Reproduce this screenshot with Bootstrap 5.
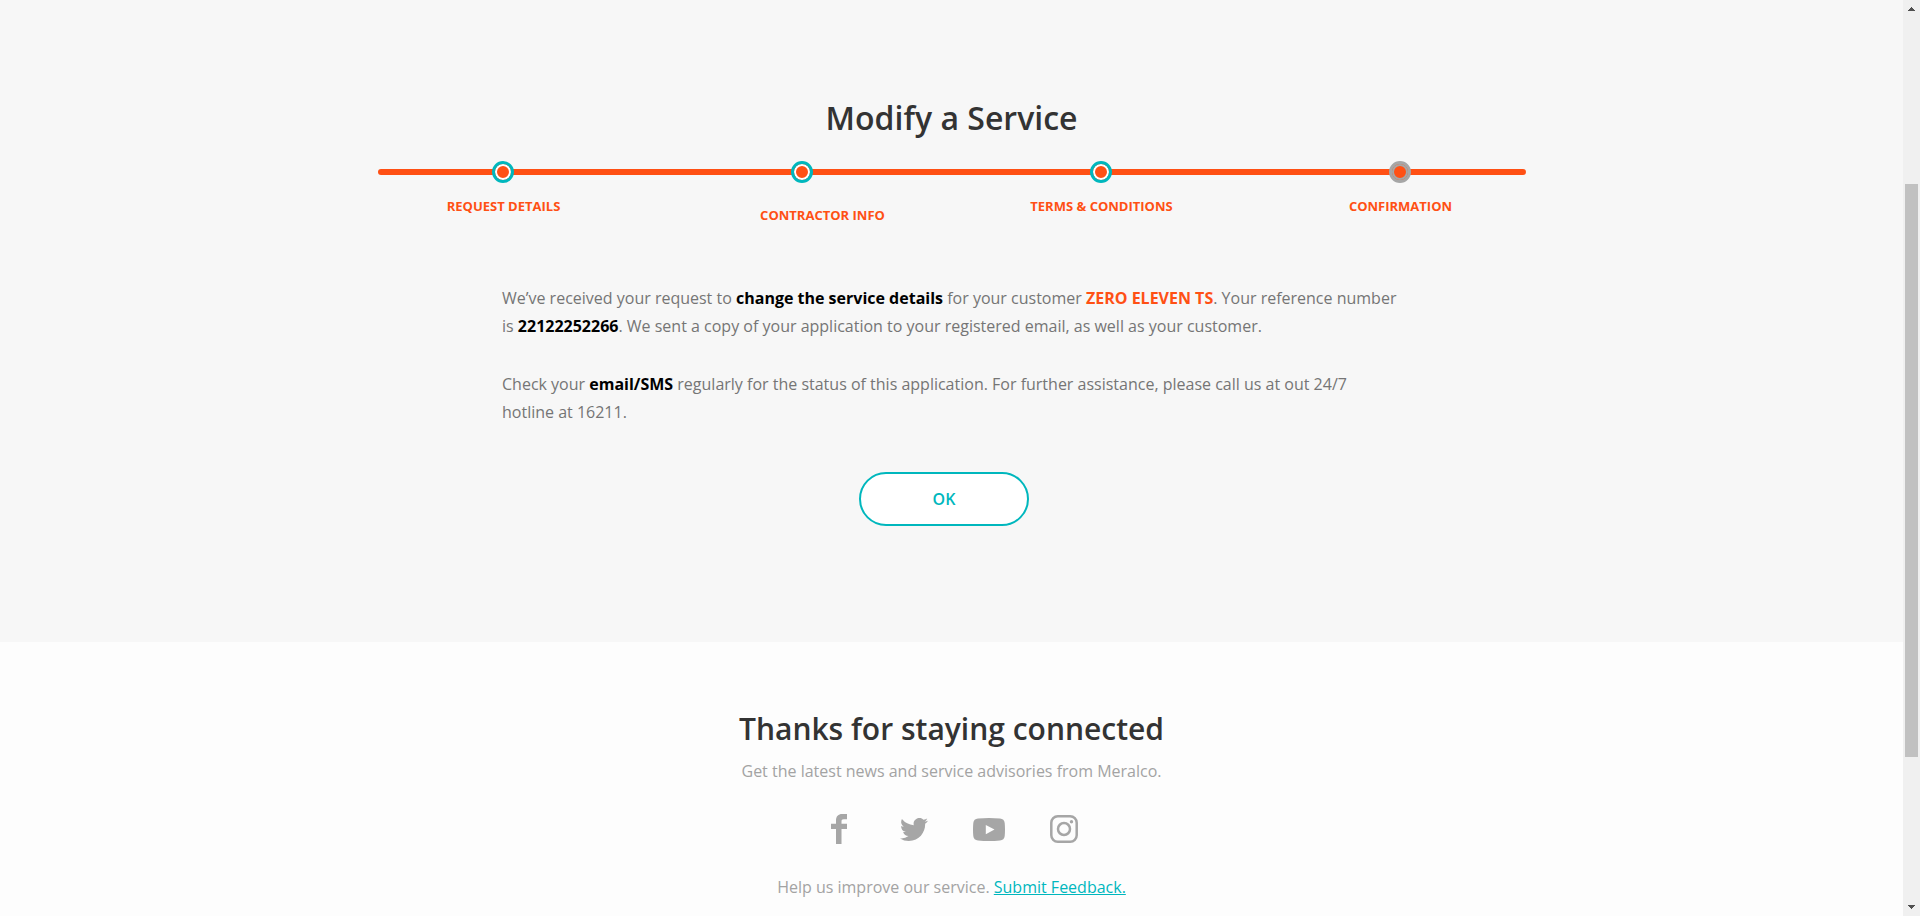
<!DOCTYPE html>
<html lang="en">
<head>
<meta charset="utf-8">
<title>Modify a Service</title>
<link href="https://cdn.jsdelivr.net/npm/bootstrap@5.3.0/dist/css/bootstrap.min.css" rel="stylesheet">
<style>
body{font-family:"Open Sans","Noto Sans",sans-serif;font-size:16px;height:100vh;overflow:hidden;background:#fdfdfd;color:#757575}
.service{background:#f7f7f7;height:642px;padding-top:94px}
.page-title{font-size:32px;font-weight:600;line-height:48px;color:#333}
.steps{width:1148px;margin-top:19px}
.steps::before{content:"";position:absolute;left:0;right:0;top:8px;height:6px;border-radius:3px;background:#ff5014}
.step-list{width:1196px;height:66px;margin-left:-24px}
.step-col{width:299px}
.dot{width:22px;height:22px;border:3px solid #00b7bd;background:#ff5014;box-shadow:inset 0 0 0 2px #fff}
.dot.current{border-color:#a6a6a6;box-shadow:inset 0 0 0 2px #a6a6a6}
.step-label{font-size:13px;font-weight:700;line-height:18px;margin-top:14px;padding-left:1px;color:#ff5014;text-transform:uppercase;white-space:nowrap}
.step-label.shifted{margin-top:23px;padding-left:41px}
.message{width:901px;margin-top:57px;padding-left:1px;padding-right:5px;line-height:28px}
.message p{margin-bottom:30px}
.message strong{font-weight:700;color:#000}
.message strong.customer{color:#ff5014}
.btn-ok{--bs-btn-color:#00b7bd;--bs-btn-bg:#fff;--bs-btn-border-color:#00b7bd;width:170px;height:54px;border-width:2px;font-weight:600;margin:16px 15px 0 0}
.stay{padding-top:63px;color:#a3a3a3}
.stay h2{font-size:30px;font-weight:600;line-height:48px;color:#333;margin:0 0 4px}
.stay p{line-height:28px;margin:0}
.social{height:32px;margin:28px 0 28px}
.social svg{display:block;margin:0 auto;fill:#a6a6a6}
.social a{width:75px}
.link-teal{color:#00b7bd}
.scroll-track{width:17px;background:#f0f0f0}
.scroll-thumb{width:13px;height:573px;background:#c1c1c1}
</style>
</head>
<body class="d-flex">
<main class="flex-grow-1">
  <section class="service d-flex flex-column align-items-center">
    <h1 class="page-title m-0">Modify a Service</h1>
    <div class="steps position-relative">
      <div class="step-list position-relative d-flex">
        <div class="step-col d-flex flex-column align-items-center"><span class="dot rounded-circle"></span><span class="step-label">Request Details</span></div>
        <div class="step-col d-flex flex-column align-items-center"><span class="dot rounded-circle"></span><span class="step-label shifted">Contractor Info</span></div>
        <div class="step-col d-flex flex-column align-items-center"><span class="dot rounded-circle"></span><span class="step-label">Terms &amp; Conditions</span></div>
        <div class="step-col d-flex flex-column align-items-center"><span class="dot current rounded-circle"></span><span class="step-label">Confirmation</span></div>
      </div>
    </div>
    <div class="message">
      <p>We’ve received your request to <strong>change the service details</strong> for your customer <strong class="customer">ZERO ELEVEN TS</strong>. Your reference number is <strong>22122252266</strong>. We sent a copy of your application to your registered email, as well as your customer.</p>
      <p>Check your <strong>email/SMS</strong> regularly for the status of this application. For further assistance, please call us at out 24/7 hotline at 16211.</p>
    </div>
    <button type="button" class="btn btn-ok rounded-pill">OK</button>
  </section>
  <section class="stay text-center">
    <h2>Thanks for staying connected</h2>
    <p>Get the latest news and service advisories from Meralco.</p>
    <div class="social d-flex justify-content-center align-items-center">
      <a href="#" aria-label="Facebook"><svg width="16" height="30" viewBox="0 0 16 30"><path d="M5 30V15H0V9.700h5V6.500C5 2.200 7.300 0 11.200 0H16v5.300h-3.200C11 5.300 10.500 6 10.500 7.500v2.200H16V15h-5.500v15z"/></svg></a>
      <a href="#" aria-label="Twitter"><svg width="28" height="23" viewBox="0 1.500 16 13" preserveAspectRatio="none"><path d="M5.026 14.500c6.038 0 9.341-5.003 9.341-9.334q.002-.211-.006-.422A6.700 6.700 0 0 0 16 3.042a6.700 6.700 0 0 1-1.889.518 3.300 3.300 0 0 0 1.447-1.817 6.500 6.500 0 0 1-2.087.793A3.286 3.286 0 0 0 7.875 5.530a9.320 9.320 0 0 1-6.767-3.429 3.290 3.290 0 0 0 1.018 4.382A3.300 3.300 0 0 1 .640 6.075v.045a3.290 3.290 0 0 0 2.632 3.218 3.200 3.200 0 0 1-.865.115 3 3 0 0 1-.614-.057 3.280 3.280 0 0 0 3.067 2.277A6.600 6.600 0 0 1 .780 13.080 6 6 0 0 1 0 13.036a9.340 9.340 0 0 0 5.026 1.464"/></svg></a>
      <a href="#" aria-label="YouTube"><svg width="32" height="23" viewBox="0 0 32 23"><path fill-rule="evenodd" d="M5 .500Q16-.500 27 .500 31.300.800 31.700 5 32.300 11.500 31.700 18 31.300 22.200 27 22.500 16 23.500 5 22.500.700 22.200.300 18-.300 11.500.300 5 .700.800 5 .500zM12.800 7v9.200l8.700-4.600z"/></svg></a>
      <a href="#" aria-label="Instagram"><svg width="28" height="28" viewBox="0 0 28 28"><rect x="1.300" y="1.300" width="25.400" height="25.400" rx="6.500" fill="none" stroke="#a6a6a6" stroke-width="2.500"/><circle cx="14" cy="14" r="6" fill="none" stroke="#a6a6a6" stroke-width="2.500"/><circle cx="21.500" cy="6.700" r="1.700"/></svg></a>
    </div>
    <p>Help us improve our service. <a href="#" class="link-teal">Submit Feedback.</a></p>
  </section>
</main>
<div class="scroll-track d-flex flex-column align-items-center flex-shrink-0">
  <svg width="7" height="4" viewBox="0 0 7 4" style="margin-top:7px" shape-rendering="crispEdges"><path fill="#505050" d="M3 0h1v1h1v1h1v1h1v1H0V3h1V2h1V1h1z"/></svg>
  <div class="scroll-thumb" style="margin-top:173px"></div>
  <svg width="7" height="4" viewBox="0 0 7 4" class="mt-auto" style="margin-bottom:7px" shape-rendering="crispEdges"><path fill="#505050" d="M0 0h7v1H6v1H5v1H4v1H3V3H2V2H1V1H0z"/></svg>
</div>
<script src="https://cdn.jsdelivr.net/npm/bootstrap@5.3.0/dist/js/bootstrap.bundle.min.js"></script>
</body>
</html>
